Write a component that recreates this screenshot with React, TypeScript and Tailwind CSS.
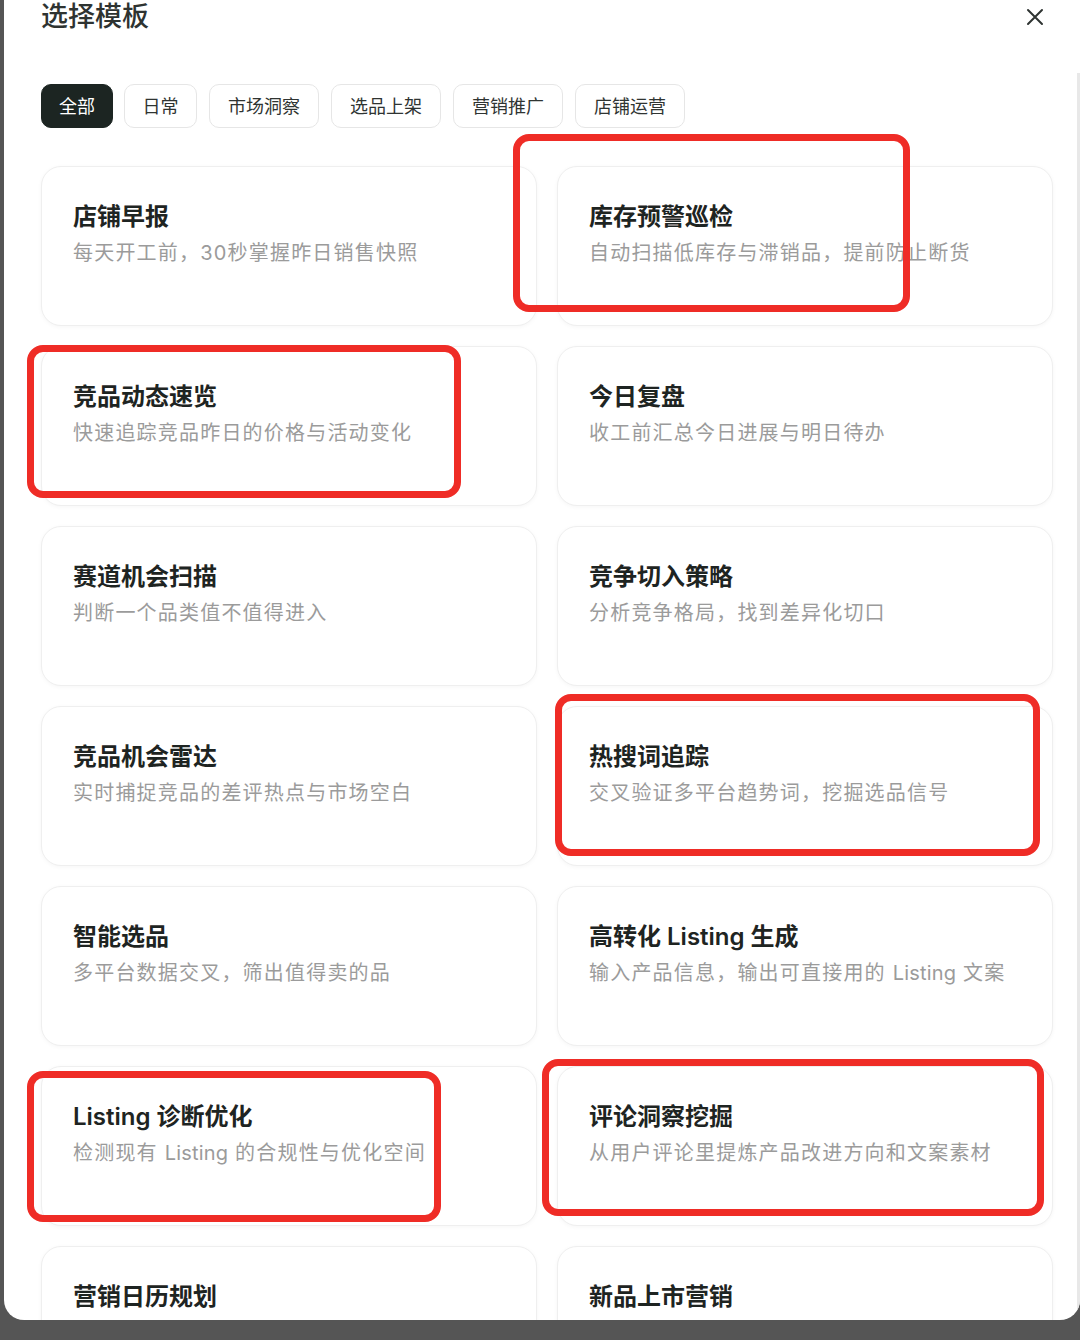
import React from "react";

const tabs: [string, string][] = [
  ["全部", "w-[72px]"],
  ["日常", "w-[73px]"],
  ["市场洞察", "w-[110px]"],
  ["选品上架", "w-[110px]"],
  ["营销推广", "w-[110px]"],
  ["店铺运营", "w-[110px]"],
];

const cards: [string, string][] = [
  ["店铺早报", "每天开工前，30秒掌握昨日销售快照"],
  ["库存预警巡检", "自动扫描低库存与滞销品，提前防止断货"],
  ["竞品动态速览", "快速追踪竞品昨日的价格与活动变化"],
  ["今日复盘", "收工前汇总今日进展与明日待办"],
  ["赛道机会扫描", "判断一个品类值不值得进入"],
  ["竞争切入策略", "分析竞争格局，找到差异化切口"],
  ["竞品机会雷达", "实时捕捉竞品的差评热点与市场空白"],
  ["热搜词追踪", "交叉验证多平台趋势词，挖掘选品信号"],
  ["智能选品", "多平台数据交叉，筛出值得卖的品"],
  ["高转化 Listing 生成", "输入产品信息，输出可直接用的 Listing 文案"],
  ["Listing 诊断优化", "检测现有 Listing 的合规性与优化空间"],
  ["评论洞察挖掘", "从用户评论里提炼产品改进方向和文案素材"],
  ["营销日历规划", "生成未来一季度的营销节点与备货建议计划"],
  ["新品上市营销", "为新品规划上市节奏与推广组合方案建议"],
];

const marks = [
  { l: 513, t: 134, w: 397, h: 178 },
  { l: 27, t: 345, w: 434, h: 153 },
  { l: 555, t: 694, w: 485, h: 162 },
  { l: 27, t: 1071, w: 414, h: 151 },
  { l: 542, t: 1059, w: 502, h: 157 },
];

function Desc({ text }: { text: string }) {
  const parts = text.split("Listing");
  return (
    <>
      {parts.map((p, i) => (
        <React.Fragment key={i}>
          {i > 0 && <span className="tracking-[0.2px]">Listing</span>}
          {p}
        </React.Fragment>
      ))}
    </>
  );
}

export default function App() {
  return (
    <div
      className="relative w-[1080px] h-[1340px] bg-[#555555] overflow-hidden"
      style={{ fontFamily: 'Inter, "Noto Sans CJK SC", "Noto Sans", sans-serif' }}
    >
      <div className="relative ml-[4px] w-[1076px] h-[1320px] bg-white rounded-b-[20px] overflow-hidden">
        <div className="flex items-center justify-between h-[34px] pl-[37px] pr-[36px]">
          <div className="text-[27px] leading-[34px] font-medium text-[#2e3331]">选择模板</div>
          <svg width="18" height="18" viewBox="0 0 18 18" fill="none" className="mt-[-1px]">
            <path d="M2 2L16 16M16 2L2 16" stroke="#2f3432" strokeWidth="2" strokeLinecap="round" />
          </svg>
        </div>

        <div className="flex gap-[12px] pl-[37px] mt-[50px]">
          {tabs.map(([t, w], i) => (
            <div
              key={t}
              className={
                i === 0
                  ? `${w} h-[44px] flex items-center justify-center rounded-[10px] border border-[#1c2522] bg-[#1c2522] text-white text-[18px] mr-[-1px]`
                  : `${w} h-[44px] flex items-center justify-center rounded-[10px] border border-[#e6e6e6] bg-white text-[#2f3432] text-[18px]`
              }
            >
              {t}
            </div>
          ))}
        </div>

        <div className="grid grid-cols-[496px_496px] gap-[20px] pl-[37px] mt-[38px]">
          {cards.map(([title, desc]) => (
            <div
              key={title}
              className="h-[160px] rounded-[20px] border border-[#efefef] bg-white shadow-[0_1px_4px_rgba(0,0,0,0.04)] px-[31px] pt-[34px]"
            >
              <div className="text-[24px] leading-[32px] font-semibold text-[#1e2422]">{title}</div>
              <div className="mt-[6px] text-[20px] leading-[28px] tracking-[1.2px] text-[#9b9b9b] whitespace-nowrap">
                <Desc text={desc} />
              </div>
            </div>
          ))}
        </div>

        <div className="absolute right-0 top-[73px] w-[3px] h-[1260px] bg-[#e8e8e8]" />
      </div>

      {marks.map((m, i) => (
        <div
          key={i}
          className="absolute border-[7px] border-[#ef2c26] rounded-[16px]"
          style={{ left: m.l, top: m.t, width: m.w, height: m.h }}
        />
      ))}
    </div>
  );
}
